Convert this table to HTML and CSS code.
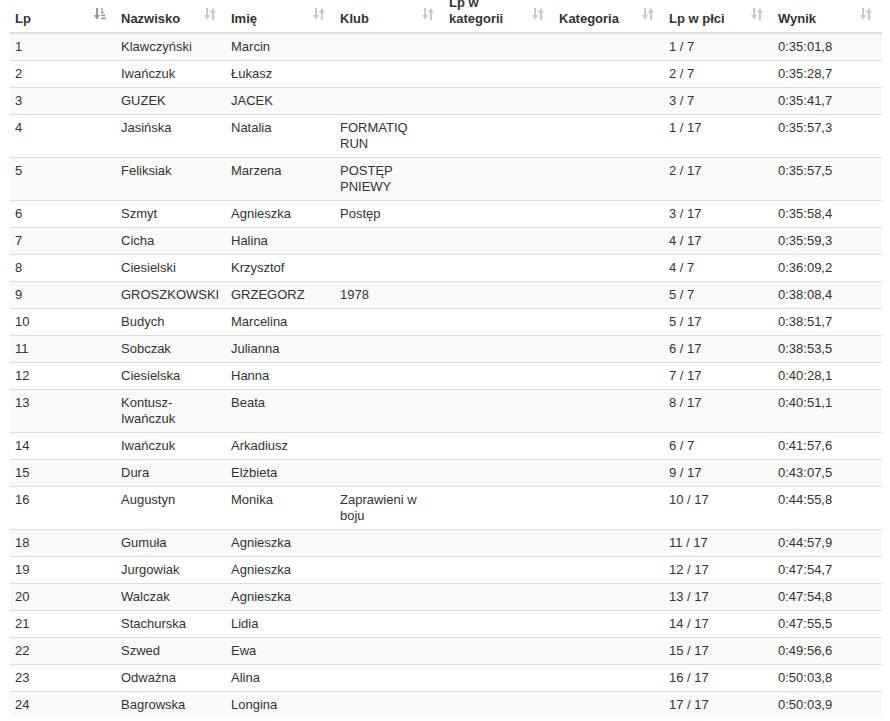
FILE: index.html
```html
<!DOCTYPE html>
<html lang="pl">
<head>
<meta charset="utf-8">
<title>Wyniki</title>
<link rel="stylesheet" href="styles.css">
</head>
<body>
<svg width="0" height="0" class="defs">
  <defs>
    <symbol id="i-sort" viewBox="0 0 12 12">
      <rect x="2" y="0" width="2.2" height="8"/>
      <polygon points="0,7 6.2,7 3.1,11.8"/>
      <rect x="7.8" y="3.8" width="2.2" height="8.2"/>
      <polygon points="5.8,4.8 12,4.8 8.9,0"/>
    </symbol>
    <symbol id="i-sorted" viewBox="0 0 12 12">
      <rect x="2" y="0" width="2.2" height="8"/>
      <polygon points="0,7 6.2,7 3.1,11.8"/>
      <rect x="7" y="0.5" width="2" height="1.7"/>
      <rect x="7" y="3.5" width="3" height="1.7"/>
      <rect x="7" y="6.5" width="4" height="1.7"/>
      <rect x="7" y="9.5" width="5" height="1.7"/>
    </symbol>
  </defs>
</svg>
<div class="page">
<table class="results">
  <colgroup>
    <col class="c-lp"><col class="c-w110"><col class="c-w109"><col class="c-w109"><col class="c-w110"><col class="c-w110"><col class="c-w109"><col class="c-w109">
  </colgroup>
  <thead>
    <tr>
      <th>Lp<svg class="sort active"><use href="#i-sorted"/></svg></th>
      <th>Nazwisko<svg class="sort"><use href="#i-sort"/></svg></th>
      <th>Imię<svg class="sort"><use href="#i-sort"/></svg></th>
      <th>Klub<svg class="sort"><use href="#i-sort"/></svg></th>
      <th>Lp w kategorii<svg class="sort"><use href="#i-sort"/></svg></th>
      <th>Kategoria<svg class="sort"><use href="#i-sort"/></svg></th>
      <th>Lp w płci<svg class="sort"><use href="#i-sort"/></svg></th>
      <th>Wynik<svg class="sort"><use href="#i-sort"/></svg></th>
    </tr>
  </thead>
  <tbody>
    <tr><td>1</td><td>Klawczyński</td><td>Marcin</td><td></td><td></td><td></td><td>1 / 7</td><td>0:35:01,8</td></tr>
    <tr><td>2</td><td>Iwańczuk</td><td>Łukasz</td><td></td><td></td><td></td><td>2 / 7</td><td>0:35:28,7</td></tr>
    <tr><td>3</td><td>GUZEK</td><td>JACEK</td><td></td><td></td><td></td><td>3 / 7</td><td>0:35:41,7</td></tr>
    <tr><td>4</td><td>Jasińska</td><td>Natalia</td><td>FORMATIQ RUN</td><td></td><td></td><td>1 / 17</td><td>0:35:57,3</td></tr>
    <tr><td>5</td><td>Feliksiak</td><td>Marzena</td><td>POSTĘP PNIEWY</td><td></td><td></td><td>2 / 17</td><td>0:35:57,5</td></tr>
    <tr><td>6</td><td>Szmyt</td><td>Agnieszka</td><td>Postęp</td><td></td><td></td><td>3 / 17</td><td>0:35:58,4</td></tr>
    <tr><td>7</td><td>Cicha</td><td>Halina</td><td></td><td></td><td></td><td>4 / 17</td><td>0:35:59,3</td></tr>
    <tr><td>8</td><td>Ciesielski</td><td>Krzysztof</td><td></td><td></td><td></td><td>4 / 7</td><td>0:36:09,2</td></tr>
    <tr><td>9</td><td>GROSZKOWSKI</td><td>GRZEGORZ</td><td>1978</td><td></td><td></td><td>5 / 7</td><td>0:38:08,4</td></tr>
    <tr><td>10</td><td>Budych</td><td>Marcelina</td><td></td><td></td><td></td><td>5 / 17</td><td>0:38:51,7</td></tr>
    <tr><td>11</td><td>Sobczak</td><td>Julianna</td><td></td><td></td><td></td><td>6 / 17</td><td>0:38:53,5</td></tr>
    <tr><td>12</td><td>Ciesielska</td><td>Hanna</td><td></td><td></td><td></td><td>7 / 17</td><td>0:40:28,1</td></tr>
    <tr><td>13</td><td>Kontusz-Iwańczuk</td><td>Beata</td><td></td><td></td><td></td><td>8 / 17</td><td>0:40:51,1</td></tr>
    <tr><td>14</td><td>Iwańczuk</td><td>Arkadiusz</td><td></td><td></td><td></td><td>6 / 7</td><td>0:41:57,6</td></tr>
    <tr><td>15</td><td>Dura</td><td>Elżbieta</td><td></td><td></td><td></td><td>9 / 17</td><td>0:43:07,5</td></tr>
    <tr><td>16</td><td>Augustyn</td><td>Monika</td><td>Zaprawieni w boju</td><td></td><td></td><td>10 / 17</td><td>0:44:55,8</td></tr>
    <tr><td>18</td><td>Gumuła</td><td>Agnieszka</td><td></td><td></td><td></td><td>11 / 17</td><td>0:44:57,9</td></tr>
    <tr><td>19</td><td>Jurgowiak</td><td>Agnieszka</td><td></td><td></td><td></td><td>12 / 17</td><td>0:47:54,7</td></tr>
    <tr><td>20</td><td>Walczak</td><td>Agnieszka</td><td></td><td></td><td></td><td>13 / 17</td><td>0:47:54,8</td></tr>
    <tr><td>21</td><td>Stachurska</td><td>Lidia</td><td></td><td></td><td></td><td>14 / 17</td><td>0:47:55,5</td></tr>
    <tr><td>22</td><td>Szwed</td><td>Ewa</td><td></td><td></td><td></td><td>15 / 17</td><td>0:49:56,6</td></tr>
    <tr><td>23</td><td>Odważna</td><td>Alina</td><td></td><td></td><td></td><td>16 / 17</td><td>0:50:03,8</td></tr>
    <tr><td>24</td><td>Bagrowska</td><td>Longina</td><td></td><td></td><td></td><td>17 / 17</td><td>0:50:03,9</td></tr>
  </tbody>
</table>
</div>
</body>
</html>
```
FILE: styles.css
```css
html, body {
  margin: 0;
  padding: 0;
  background: #fff;
}
body {
  font-family: "Liberation Sans", Arial, Helvetica, sans-serif;
  font-size: 13px;
  line-height: 16px;
  color: #333;
  overflow: hidden;
}
.defs {
  position: absolute;
  width: 0;
  height: 0;
}
.page {
  padding: 0 8px 0 10px;
  margin-top: -10px;
}
.results {
  width: 872px;
  table-layout: fixed;
  border-collapse: collapse;
  border-spacing: 0;
}
.c-lp { width: 106px; }
.c-w110 { width: 110px; }
.c-w109 { width: 109px; }
.results th {
  position: relative;
  text-align: left;
  font-weight: bold;
  vertical-align: bottom;
  padding: 5px 30px 5px 5px;
  border-bottom: 2px solid #ddd;
}
.results td {
  padding: 5px;
  vertical-align: top;
  border-top: 1px solid #ddd;
}
.results tbody tr:nth-child(odd) {
  background: #f9f9f9;
}
.sort {
  position: absolute;
  right: 10px;
  bottom: 12px;
  width: 12px;
  height: 12px;
  fill: #cacaca;
}
.sort.active {
  fill: #999;
}
```
